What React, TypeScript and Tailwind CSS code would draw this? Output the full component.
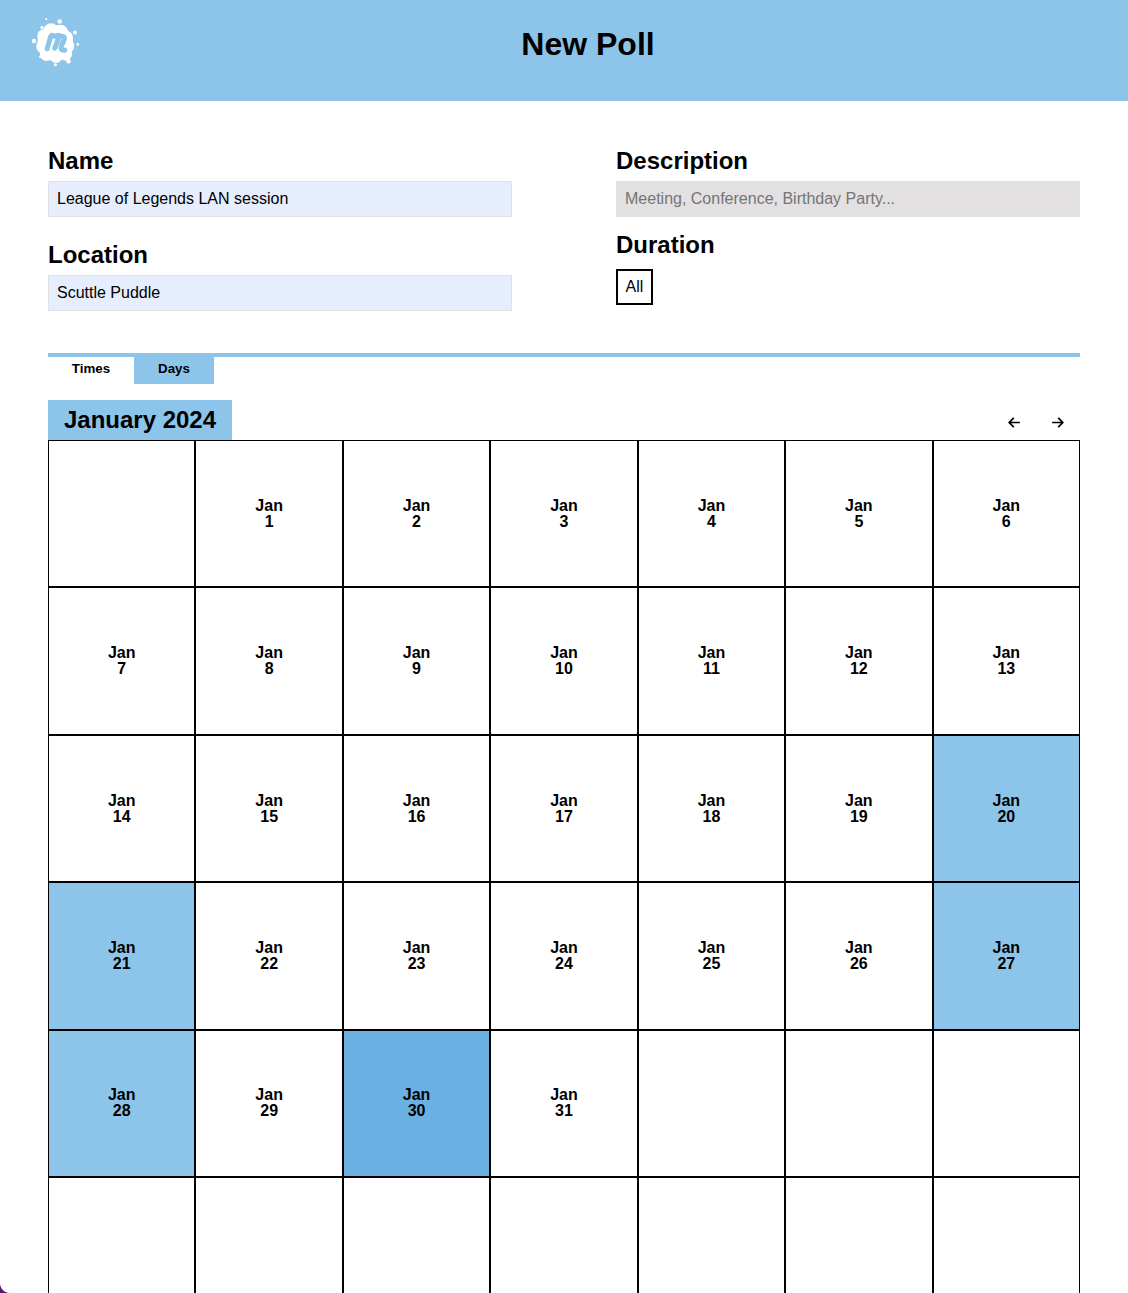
const SELECTED = [20, 21, 27, 28];
const HOVERED = 30;
const CELLS = Array.from({ length: 42 }, (_, i) => (i >= 1 && i <= 31 ? i : null));

function Logo() {
  return (
    <svg viewBox="0 0 48 48" className="size-12 shrink-0 overflow-visible" fill="white">
      <circle cx="23.3" cy="25" r="17.8" />
      <circle cx="19" cy="12.9" r="7.6" />
      <circle cx="28.5" cy="14.3" r="7.6" />
      <circle cx="12" cy="18" r="6.8" />
      <circle cx="34.6" cy="19.5" r="6.4" />
      <circle cx="11.4" cy="28.5" r="7.1" />
      <circle cx="35.4" cy="28" r="6.9" />
      <circle cx="14.5" cy="36.3" r="6.6" />
      <circle cx="33.4" cy="35.8" r="6.8" />
      <circle cx="24" cy="38.5" r="6.4" />
      <circle cx="14.3" cy="1.1" r="1.1" />
      <circle cx="27.7" cy="3.4" r="2.2" />
      <circle cx="10" cy="9.4" r="1.7" />
      <circle cx="2" cy="23" r="2.2" />
      <circle cx="43" cy="14.5" r="1.9" />
      <circle cx="45.8" cy="26.4" r="1.3" />
      <circle cx="8.1" cy="39" r="1.1" />
      <circle cx="23.4" cy="46.7" r="1.5" />
      <circle cx="36.5" cy="43.3" r="2.3" />
      <circle cx="47.7" cy="20" r="0.4" opacity="0.6" />
      <path
        d="M15.2 30.6 L18.6 18.6 Q19.3 16.9 21 17.5 Q22.4 18 23.7 18.4 Q25.2 17.4 27 17.5 M22.8 30.2 L26.8 19.6 Q27.6 17.9 28.8 18 Q30 18.6 31 18.5 Q32.8 19.2 32.2 21.2 L29.2 28.4 Q28.4 31.6 30.8 31.9 L32.6 32.1"
        fill="none"
        stroke="#8dc5ea"
        strokeWidth="5.1"
        strokeLinecap="round"
        strokeLinejoin="round"
      />
    </svg>
  );
}

function Arrow({ flip = false }: { flip?: boolean }) {
  return (
    <button className="flex h-3 w-3 items-center justify-center" aria-label={flip ? "Next month" : "Previous month"}>
      <svg viewBox="0 0 12 12" className="size-3" fill="none" stroke="black" strokeWidth="1.7">
        <path d={flip ? "M.2 6.5h10.4M6.2 1.8l4.6 4.7-4.6 4.7" : "M11.8 6.5H1.4M5.8 1.8L1.2 6.5l4.6 4.7"} />
      </svg>
    </button>
  );
}

function Heading({ children }: { children: string }) {
  return <h2 className="text-2xl font-bold leading-6">{children}</h2>;
}

export default function App() {
  return (
    <div className="relative h-[1293px] w-[1128px] overflow-hidden bg-white font-['Liberation_Sans',Arial,sans-serif] text-base text-black">
      <header className="flex h-[101px] items-start bg-[#8dc5ea] px-8 pt-[18px]">
        <Logo />
        <h1 className="flex-1 pt-2 text-center text-[32px] font-bold leading-9">New Poll</h1>
      </header>

      <main className="px-12">
        <form className="grid grid-cols-2 gap-x-[104px] pt-12">
          <div>
            <Heading>Name</Heading>
            <input
              className="mt-2 block h-9 w-full border border-[#e2e0e1] bg-[#e6edfd] px-2"
              defaultValue="League of Legends LAN session"
            />
            <div className="mt-[26px]">
              <Heading>Location</Heading>
            </div>
            <input
              className="mt-2 block h-9 w-full border border-[#e2e0e1] bg-[#e6edfd] px-2"
              defaultValue="Scuttle Puddle"
            />
          </div>
          <div>
            <Heading>Description</Heading>
            <input
              className="mt-2 block h-9 w-full border border-[#e2e0e1] bg-[#e2e0e1] px-2 placeholder:text-[#757575]"
              placeholder="Meeting, Conference, Birthday Party..."
            />
            <div className="mt-4">
              <Heading>Duration</Heading>
            </div>
            <button type="button" className="mt-3 block h-9 w-[37px] border-2 border-black leading-8">
              All
            </button>
          </div>
        </form>

        <nav className="mt-[42px] flex h-[31px] border-t-4 border-[#8dc5ea] text-[13.33px] font-bold">
          <button className="w-[86px] pb-1">Times</button>
          <button className="w-20 bg-[#8dc5ea] pb-1">Days</button>
        </nav>

        <div className="mt-4 flex h-10 justify-between">
          <h2 className="w-[184px] bg-[#8dc5ea] text-center text-2xl font-bold leading-10">January 2024</h2>
          <div className="flex gap-8 pr-4 pt-4">
            <Arrow />
            <Arrow flip />
          </div>
        </div>

        <div className="grid grid-cols-7">
          {CELLS.map((day, i) => (
            <div
              key={i}
              className={`flex aspect-square flex-col items-center justify-center border border-black text-center font-bold leading-4 ${
                day === HOVERED ? "bg-[#6ab0e3]" : day && SELECTED.includes(day) ? "bg-[#8dc5ea]" : ""
              }`}
            >
              {day && (
                <>
                  <span>Jan</span>
                  <span>{day}</span>
                </>
              )}
            </div>
          ))}
        </div>
      </main>

      <div className="pointer-events-none absolute bottom-0 left-0 size-[10px] bg-[radial-gradient(circle_at_top_right,transparent_9.5px,#5b1572_10.5px)]" />
    </div>
  );
}
